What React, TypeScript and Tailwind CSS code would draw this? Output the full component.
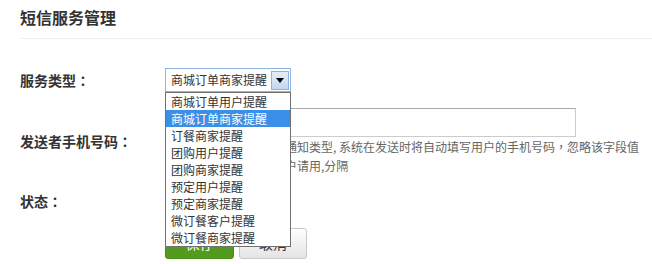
import React from "react";

const options = [
  "商城订单用户提醒",
  "商城订单商家提醒",
  "订餐商家提醒",
  "团购用户提醒",
  "团购商家提醒",
  "预定用户提醒",
  "预定商家提醒",
  "微订餐客户提醒",
  "微订餐商家提醒",
];

const tc = { fontFamily: '"Noto Sans CJK TC", sans-serif' };

function Label({ text, className }: { text: string; className: string }) {
  return (
    <div className={className}>
      {text}
      <span style={tc}>：</span>
    </div>
  );
}

export default function App() {
  return (
    <div
      className="w-[652px] h-[264px] overflow-hidden bg-white text-[#333]"
      style={{ fontFamily: '"Noto Sans CJK SC", "Microsoft YaHei", sans-serif' }}
    >
      <div className="ml-5 h-[39px] border-b border-[#eeeeee] pt-[5px]">
        <h1 className="text-[16px] leading-[24px] font-bold text-[#333]">短信服务管理</h1>
      </div>

      <div className="pl-5 flex flex-col">
        {/* Row 1 */}
        <div className="flex mt-[29px] relative z-10">
          <Label text="服务类型" className="w-[145px] text-[14px] leading-[24px] font-bold" />
          <div className="relative w-[126px]">
            <div className="h-[24px] border border-[#8db3de] bg-white flex items-center pl-[5px] pr-[1px]">
              <span className="text-[12px] leading-[16px] flex-1 whitespace-nowrap">商城订单商家提醒</span>
              <div className="w-[18px] h-[19px] border border-[#8fb2dd] bg-gradient-to-b from-[#e6eef9] to-[#c3d7ef] flex items-center justify-center">
                <div className="w-0 h-0 border-l-[4px] border-r-[4px] border-t-[5px] border-l-transparent border-r-transparent border-t-black" />
              </div>
            </div>
            <ul className="absolute left-0 top-[24px] w-[126px] bg-white border border-[#707070] py-0">
              {options.map((o, i) => (
                <li
                  key={o}
                  className={
                    i === 1
                      ? "h-[17px] leading-[17px] text-[12px] pl-[5px] bg-[#3b8fe6] text-white whitespace-nowrap"
                      : "h-[17px] leading-[17px] text-[12px] pl-[5px] text-[#333] whitespace-nowrap"
                  }
                >
                  {o}
                </li>
              ))}
            </ul>
          </div>
        </div>

        {/* Row 2 */}
        <div className="flex mt-[16px]">
          <Label text="发送者手机号码" className="w-[145px] text-[14px] leading-[20px] font-bold pt-[23px]" />
          <div className="flex flex-col">
            <input
              className="w-[411px] h-[29px] border border-[#cccccc] border-t-[#a8a8a8] outline-none px-2 text-[12px]"
              defaultValue=""
            />
            <p className="text-[12px] leading-[19px] text-[#666] w-[480px]">
              如果选择的是用户短信通知类型, 系统在发送时将自动填写用户的手机号码<span style={tc}>，</span>忽略该字段值
              <br />
              如果需要发送给多个用户请用,分隔
            </p>
          </div>
        </div>

        {/* Row 3 */}
        <div className="flex mt-[16px]">
          <Label text="状态" className="w-[145px] text-[14px] leading-[20px] font-bold" />
          <div className="flex items-center gap-3 text-[12px]">
            <label className="flex items-center gap-1">
              <input type="radio" name="s" defaultChecked />
              开启
            </label>
            <label className="flex items-center gap-1">
              <input type="radio" name="s" />
              关闭
            </label>
          </div>
        </div>

        {/* Row 4 */}
        <div className="flex mt-[17px] pl-[145px] gap-[5px]">
          <button className="w-[69px] h-[31px] rounded-[3px] bg-[#529b1d] border border-[#4a8c1a] text-white text-[14px]">
            保存
          </button>
          <button className="w-[68px] h-[31px] rounded-[3px] bg-gradient-to-b from-white to-[#e4e4e4] border border-[#c8c8c8] text-[#333] text-[14px]">
            取消
          </button>
        </div>
      </div>
    </div>
  );
}
